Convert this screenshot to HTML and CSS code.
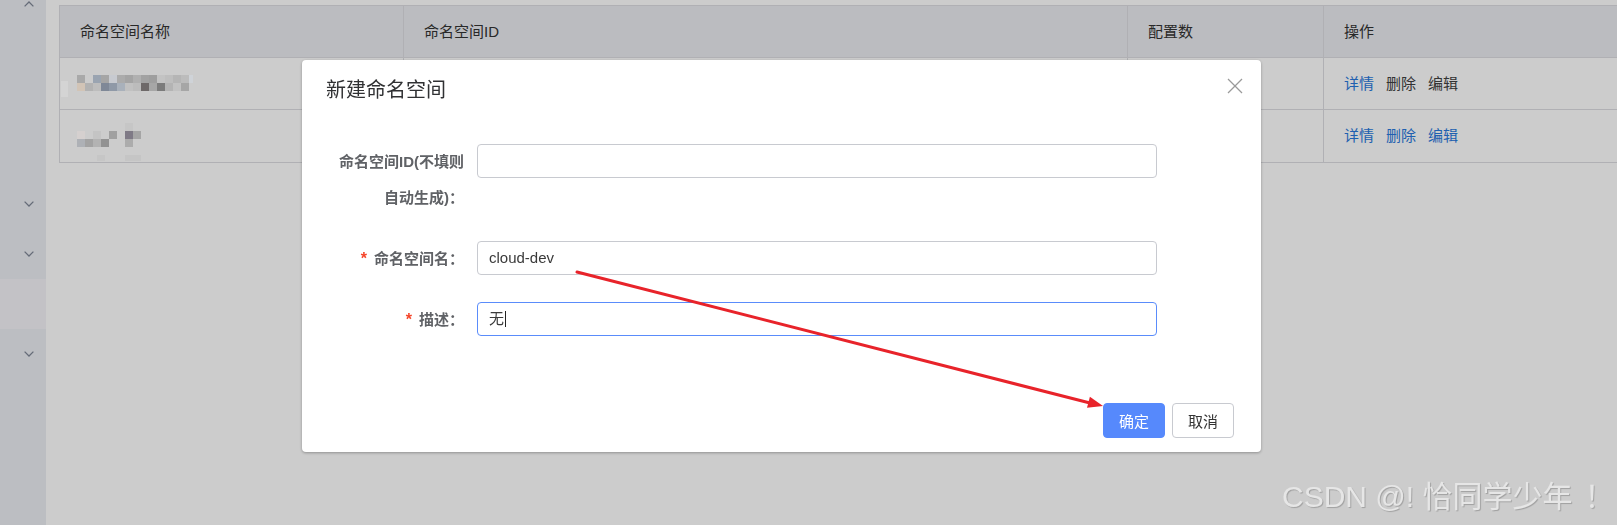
FILE: index.html
```html
<!DOCTYPE html>
<html lang="zh-CN">
<head>
<meta charset="utf-8">
<title>命名空间</title>
<link rel="stylesheet" href="styles.css">
</head>
<body>
<div class="app">
  <aside class="sidebar">
    <ul class="menu">
      <li class="menu-item"><svg class="chev" viewBox="0 0 10 6"><polyline points="0.6,5.4 5,1 9.4,5.4"/></svg></li>
      <li class="menu-sub"></li>
      <li class="menu-sub"></li>
      <li class="menu-sub"></li>
      <li class="menu-item"><svg class="chev" viewBox="0 0 10 6"><polyline points="0.6,0.6 5,5 9.4,0.6"/></svg></li>
      <li class="menu-item"><svg class="chev" viewBox="0 0 10 6"><polyline points="0.6,0.6 5,5 9.4,0.6"/></svg></li>
      <li class="menu-sub active"></li>
      <li class="menu-item"><svg class="chev" viewBox="0 0 10 6"><polyline points="0.6,0.6 5,5 9.4,0.6"/></svg></li>
    </ul>
  </aside>
  <main class="content">
    <table class="ns-table">
      <colgroup>
        <col class="c1"><col class="c2"><col class="c3"><col class="c4">
      </colgroup>
      <thead>
        <tr><th>命名空间名称</th><th>命名空间ID</th><th>配置数</th><th>操作</th></tr>
      </thead>
      <tbody>
        <tr>
          <td></td><td></td><td></td>
          <td><div class="ops"><a class="op">详情</a><a class="op visited">删除</a><a class="op visited">编辑</a></div></td>
        </tr>
        <tr>
          <td></td><td></td><td></td>
          <td><div class="ops"><a class="op">详情</a><a class="op">删除</a><a class="op">编辑</a></div></td>
        </tr>
      </tbody>
    </table>
  </main>
</div>

<div class="mask">
  <div class="dialog">
    <div class="dialog-header">
      <span class="dialog-title">新建命名空间</span>
      <button class="dialog-close" aria-label="关闭">
        <svg viewBox="0 0 16 16"><line x1="1" y1="1" x2="15" y2="15"/><line x1="15" y1="1" x2="1" y2="15"/></svg>
      </button>
    </div>
    <div class="dialog-body">
      <div class="form-item">
        <label class="form-label">命名空间ID(不填则自动生成)：</label>
        <div class="input"></div>
      </div>
      <div class="form-item">
        <label class="form-label"><span class="req">*</span>命名空间名：</label>
        <div class="input">cloud-dev</div>
      </div>
      <div class="form-item">
        <label class="form-label"><span class="req">*</span>描述：</label>
        <div class="input focus">无<span class="caret"></span></div>
      </div>
    </div>
    <div class="dialog-footer">
      <button class="btn primary">确定</button>
      <button class="btn">取消</button>
    </div>
  </div>
</div>

<svg class="annot" viewBox="0 0 1617 525" width="1617" height="525">
  <g class="mosaic">
    <rect x="61" y="81" width="7" height="16" fill="#d4d4d4"/>
    <rect x="77" y="75" width="8" height="8" fill="#a9a9a9"/>
    <rect x="93" y="75" width="8" height="8" fill="#9aa4b1"/>
    <rect x="101" y="75" width="8" height="8" fill="#a5a5a5"/>
    <rect x="109" y="75" width="8" height="8" fill="#c7cad0"/>
    <rect x="117" y="75" width="8" height="8" fill="#ababab"/>
    <rect x="125" y="75" width="8" height="8" fill="#a4a4a4"/>
    <rect x="133" y="75" width="8" height="8" fill="#b0b0b0"/>
    <rect x="141" y="75" width="8" height="8" fill="#a2a2a2"/>
    <rect x="149" y="75" width="8" height="8" fill="#9e9e9e"/>
    <rect x="157" y="75" width="8" height="8" fill="#c3c3c3"/>
    <rect x="165" y="75" width="8" height="8" fill="#bebebe"/>
    <rect x="173" y="75" width="8" height="8" fill="#b5b5b5"/>
    <rect x="181" y="75" width="8" height="8" fill="#bcbcbc"/>
    <rect x="189" y="75" width="4" height="8" fill="#cfd3d8"/>
    <rect x="77" y="83" width="8" height="8" fill="#d2c4b6"/>
    <rect x="85" y="83" width="8" height="8" fill="#b2b2b2"/>
    <rect x="93" y="83" width="8" height="8" fill="#bdbdbd"/>
    <rect x="101" y="83" width="8" height="8" fill="#7f8897"/>
    <rect x="109" y="83" width="8" height="8" fill="#8f99a7"/>
    <rect x="117" y="83" width="8" height="8" fill="#a9b1bb"/>
    <rect x="125" y="83" width="8" height="8" fill="#c1c1c1"/>
    <rect x="133" y="83" width="8" height="8" fill="#bcbcbc"/>
    <rect x="141" y="83" width="8" height="8" fill="#6e6969"/>
    <rect x="149" y="83" width="8" height="8" fill="#a6a6a6"/>
    <rect x="157" y="83" width="8" height="8" fill="#7b7b7b"/>
    <rect x="165" y="83" width="8" height="8" fill="#b4b4b4"/>
    <rect x="173" y="83" width="8" height="8" fill="#c2c2c2"/>
    <rect x="181" y="83" width="8" height="8" fill="#a6a6a6"/>

    <rect x="125" y="123" width="8" height="8" fill="#c6c6c6"/>
    <rect x="77" y="131" width="8" height="8" fill="#d5d0cf"/>
    <rect x="93" y="131" width="8" height="8" fill="#c4c4c4"/>
    <rect x="109" y="131" width="8" height="8" fill="#a0a0a0"/>
    <rect x="125" y="131" width="8" height="8" fill="#7f7a86"/>
    <rect x="133" y="131" width="8" height="8" fill="#a5a5a5"/>
    <rect x="77" y="139" width="8" height="8" fill="#aeb1b6"/>
    <rect x="85" y="139" width="8" height="8" fill="#a3a3a3"/>
    <rect x="93" y="139" width="8" height="8" fill="#b3b3b3"/>
    <rect x="101" y="139" width="8" height="8" fill="#929292"/>
    <rect x="125" y="139" width="8" height="8" fill="#acacac"/>
    <rect x="97" y="155" width="8" height="6" fill="#c6c6c6"/>
    <rect x="125" y="155" width="16" height="6" fill="#c5c5c5"/>
  </g>
  <g class="arrow">
    <line x1="577" y1="272" x2="1090" y2="403"/>
    <polygon points="1103,406 1087,407.8 1089.9,396.8"/>
  </g>
</svg>

<div class="watermark">CSDN @! 恰同学少年<span class="wm-bang">！</span></div>
</body>
</html>
```

FILE: styles.css
```css
html, body {
  margin: 0;
  padding: 0;
}

body {
  width: 1617px;
  height: 525px;
  overflow: hidden;
  background: #ffffff;
  font-family: "Liberation Sans", "Noto Sans CJK SC", sans-serif;
  font-size: 15px;
  color: #333333;
}

.app {
  display: flex;
  height: 525px;
}

/* ---------- sidebar ---------- */
.sidebar {
  width: 46px;
  flex-shrink: 0;
  background: #ebeef3;
  overflow: hidden;
}

.menu {
  list-style: none;
  margin: -21px 0 0;
  padding: 0;
}

.menu li {
  height: 50px;
  display: flex;
  align-items: center;
  justify-content: flex-end;
  padding-right: 12px;
}

.menu li.active {
  background: #f4f3f8;
}

.chev {
  width: 10px;
  height: 6px;
  display: block;
}

.chev polyline {
  fill: none;
  stroke: #7f8797;
  stroke-width: 1.3;
}

/* ---------- content / table ---------- */
.content {
  flex: 1;
  padding: 5px 0 0 13px;
  overflow: hidden;
}

.ns-table {
  width: 1600px;
  table-layout: fixed;
  border-collapse: separate;
  border-spacing: 0;
  border-top: 1px solid #dcdde1;
  border-left: 1px solid #dcdde1;
  font-size: 15px;
}

.ns-table .c1 { width: 344px; }
.ns-table .c2 { width: 724px; }
.ns-table .c3 { width: 196px; }

.ns-table th,
.ns-table td {
  box-sizing: border-box;
  height: 52px;
  padding: 0 0 0 20px;
  border-right: 1px solid #dcdde1;
  border-bottom: 1px solid #dcdde1;
  text-align: left;
  font-weight: normal;
  line-height: 20px;
  color: #333333;
}

.ns-table thead th {
  background: #eaebf0;
}

.ns-table tbody tr:last-child td {
  height: 53px;
}

.ops {
  display: flex;
  gap: 12px;
}

.op {
  color: #2878dc;
  cursor: pointer;
}

.op.visited {
  color: #404040;
}

/* ---------- modal ---------- */
.mask {
  position: fixed;
  inset: 0;
  background: rgba(0, 0, 0, 0.2);
}

.dialog {
  width: 959px;
  margin: 60px 0 0 302px;
  background: #ffffff;
  border-radius: 4px;
  box-shadow: 0 1px 3px rgba(0, 0, 0, 0.3);
}

.dialog-header {
  display: flex;
  justify-content: space-between;
  align-items: flex-start;
  padding: 18px 18px 0 24px;
}

.dialog-title {
  font-size: 20px;
  line-height: 24px;
  color: #303133;
}

.dialog-close {
  width: 16px;
  height: 16px;
  padding: 0;
  margin: 0;
  border: 0;
  background: none;
}

.dialog-close svg {
  width: 16px;
  height: 16px;
  display: block;
}

.dialog-close line {
  stroke: #9a9a9a;
  stroke-width: 1.3;
}

.dialog-body {
  padding: 42px 0 0 28px;
}

.form-item {
  display: flex;
  align-items: flex-start;
  margin-bottom: 25px;
}

.form-label {
  box-sizing: border-box;
  width: 147px;
  padding-right: 13px;
  text-align: right;
  font-size: 15px;
  font-weight: bold;
  line-height: 36px;
  color: #606266;
}

.req {
  color: #f5452a;
  font-size: 16px;
  margin-right: 7px;
}

.input {
  box-sizing: border-box;
  width: 680px;
  height: 34px;
  padding: 0 11px;
  border: 1px solid #c8cad0;
  border-radius: 4px;
  font-size: 15px;
  line-height: 32px;
  color: #3a3a3a;
  display: flex;
  align-items: center;
}

.input.focus {
  border-color: #5a8cfb;
}

.caret {
  display: inline-block;
  width: 1px;
  height: 16px;
  margin-left: 1px;
  background: #222222;
}

.dialog-footer {
  display: flex;
  justify-content: flex-end;
  gap: 7px;
  padding: 40px 27px 14px 0;
}

.btn {
  box-sizing: border-box;
  height: 35px;
  padding: 0 15px;
  border: 1px solid #c8cad0;
  border-radius: 4px;
  background: #ffffff;
  color: #333333;
  font-family: "Noto Sans CJK SC", sans-serif;
  font-size: 15px;
  line-height: 33px;
}

.btn.primary {
  background: #5689fc;
  border-color: #5689fc;
  color: #ffffff;
}

/* ---------- screenshot annotations ---------- */
.annot {
  position: fixed;
  left: 0;
  top: 0;
  pointer-events: none;
}

.arrow line {
  stroke: #e8232a;
  stroke-width: 3;
  stroke-linecap: round;
}

.arrow polygon {
  fill: #e8232a;
}

.watermark {
  position: fixed;
  left: 1282px;
  top: 479px;
  font-family: "Liberation Sans", "Noto Sans CJK SC", sans-serif;
  font-size: 30px;
  line-height: 36px;
  color: #e6e6e6;
  text-shadow: 1px 1px 1px rgba(0, 0, 0, 0.22);
  white-space: nowrap;
  pointer-events: none;
}

.wm-bang {
  margin-left: 12px;
}
```
